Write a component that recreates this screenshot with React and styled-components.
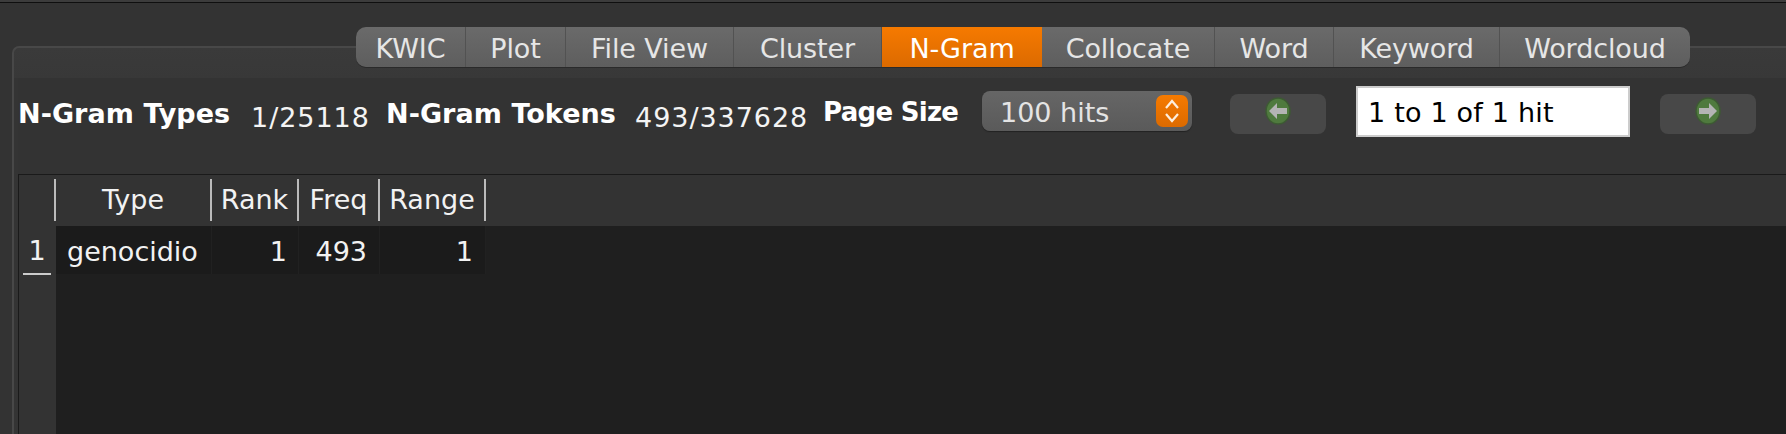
import React from "react";
import styled, { createGlobalStyle } from "styled-components";

const Global = createGlobalStyle`
  html, body { margin: 0; padding: 0; background: #333; overflow: hidden; }
  body { font-family: "DejaVu Sans", "Liberation Sans", sans-serif; }
`;
const Page = styled.div`
  width: 1786px; height: 434px; background: #333; overflow: hidden; box-sizing: border-box;
`;
const TopLine = styled.div`
  height: 2px; background: #3c3c3c; border-bottom: 1px solid #0f0f0f;
`;
const Shell = styled.div`
  padding: 43px 0 0 12px;
`;
const Frame = styled.div`
  height: 400px; border: 2px solid #484848; border-right: none; border-bottom: none;
  border-top-left-radius: 7px; background: linear-gradient(#3a3a3a 0, #383838 30px, #343434 30px);
  padding-left: 4px;
`;
const Tabs = styled.div`
  display: flex; height: 40px; width: 1334px; margin: -21px 0 0 338px;
  border-radius: 10px; overflow: hidden; background: linear-gradient(#6a6a6a, #5e5e5e);
  box-shadow: 0 1px 0 #2a2a2a;
`;
const Tab = styled.div`
  width: ${p => p.$w}px; box-sizing: border-box; display: flex; align-items: center; justify-content: center;
  font-size: 27px; letter-spacing: -0.1px; padding-top: 3px;
  color: ${p => (p.$active ? "#fff" : "#e6e6e6")};
  background: ${p => (p.$active ? "linear-gradient(#f67a00, #dc6a00)" : "transparent")};
  border-right: ${p => (p.$last || p.$active ? "none" : "1px solid #525252")};
`;
const Content = styled.div`
  margin-top: 11px; background: #333; height: 400px;
`;
const Toolbar = styled.div`
  height: 96px; display: flex; align-items: flex-start; color: #fff; box-sizing: border-box;
`;
const Label = styled.div`
  font-weight: 700; font-size: ${p => p.$size || 27}px; letter-spacing: ${p => p.$ls ?? 0.05}px; white-space: nowrap;
  width: ${p => p.$w}px; margin-top: ${p => p.$t}px; box-sizing: border-box;
`;
const Value = styled.div`
  font-size: 27px; letter-spacing: 0.95px; white-space: nowrap; color: #f4f4f4;
  width: ${p => p.$w}px; margin-top: ${p => p.$t}px; box-sizing: border-box;
`;
const Select = styled.div`
  width: 210px; height: 40px; margin-top: 13px; border-radius: 8px; background: linear-gradient(#666, #5a5a5a);
  box-shadow: 0 1px 1px #222; display: flex; align-items: center; justify-content: space-between;
  font-size: 27px; color: #e4e4e4; padding: 0 4px 0 18px; box-sizing: border-box;
`;
const SelectText = styled.span`
  padding-top: 2px;
`;
const Stepper = styled.div`
  width: 32px; height: 32px; border-radius: 7px; background: linear-gradient(#f67a00, #dc6a00);
  display: flex; align-items: center; justify-content: center;
`;
const NavButton = styled.div`
  width: 96px; height: 40px; border-radius: 8px; background: #484848; margin: 16px 0 0 ${p => p.$l}px;
  display: flex; justify-content: center; padding-top: 3px; box-sizing: border-box;
`;
const RangeBox = styled.div`
  width: 274px; height: 51px; margin: 8px 0 0 30px; background: #fff; border: 2px solid #ccc; box-sizing: border-box;
  color: #000; font-size: 27px; letter-spacing: 0.2px; padding: 2px 0 0 10px; display: flex; align-items: center;
`;
const Table = styled.div`
  border-top: 1px solid #1a1a1a; border-left: 1px solid #1a1a1a; height: 260px; display: grid;
  grid-template-columns: 37px 1fr; grid-template-rows: 51px 1fr;
`;
const Corner = styled.div`
  background: #333; padding-top: 4px;
  &::after { content: ""; display: block; width: 0; height: 42px; margin-left: 35px; border-right: 2px solid #bbb; }
`;
const HeaderRow = styled.div`
  display: flex; background: #333; padding-top: 4px;
`;
const HeadCell = styled.div`
  width: ${p => p.$w}px; height: 42px; border-right: 2px solid #bbb; box-sizing: border-box;
  display: flex; align-items: center; justify-content: center; padding-bottom: 1px;
  color: #f2f2f2; font-size: 27px;
`;
const RowHeader = styled.div`
  background: #333;
`;
const RowNo = styled.div`
  width: 28px; margin-left: 4px; height: 49px; box-sizing: border-box; border-bottom: 2px solid #ccc; padding-top: 1px;
  color: #f2f2f2; font-size: 27px; display: flex; align-items: center; justify-content: center;
`;
const Body = styled.div`
  background: #1f1f1f;
`;
const Row = styled.div`
  display: flex; height: 48px;
`;
const Cell = styled.div`
  width: ${p => p.$w}px; box-sizing: border-box; background: #1b1b1b; border-right: 1px solid #212121;
  display: flex; align-items: center; justify-content: ${p => (p.$left ? "flex-start" : "flex-end")};
  padding: 2px ${p => (p.$left ? 0 : (p.$r ?? 12))}px 0 ${p => (p.$left ? 11 : 0)}px;
  color: #f2f2f2; font-size: 27px;
`;

const Arrow = ({ dir }) => (
  <svg width="26" height="28" viewBox="0 0 26 28">
    <ellipse cx="13" cy="14" rx="12" ry="13" fill="#4f7a3e" stroke="#3d5a33" strokeWidth="1.5" />
    <path
      d={dir === "left" ? "M4 14 L12 6 V11 H22 V17 H12 V22 Z" : "M22 14 L14 6 V11 H4 V17 H14 V22 Z"}
      fill="#b4b4b4"
    />
  </svg>
);

const tabs = [
  ["KWIC", 110], ["Plot", 100], ["File View", 168], ["Cluster", 148], ["N-Gram", 160],
  ["Collocate", 173], ["Word", 119], ["Keyword", 166], ["Wordcloud", 190],
];
const cols = [["Type", 156], ["Rank", 87], ["Freq", 81], ["Range", 106]];

export default function App() {
  return (
    <Page>
      <Global />
      <TopLine />
      <Shell>
        <Frame>
          <Tabs>
            {tabs.map(([t, w], i) => (
              <Tab key={t} $w={w} $active={t === "N-Gram"} $last={i === tabs.length - 1}>{t}</Tab>
            ))}
          </Tabs>
          <Content>
            <Toolbar>
              <Label $w={233} $t={20}>N-Gram Types</Label>
              <Value $w={135} $t={24}>1/25118</Value>
              <Label $w={249} $t={20}>N-Gram Tokens</Label>
              <Value $w={188} $t={24}>493/337628</Value>
              <Label $w={159} $t={19} $size={26} $ls={-0.7}>Page Size</Label>
              <Select>
                <SelectText>100 hits</SelectText>
                <Stepper>
                  <svg width="16" height="26" viewBox="0 0 16 26" fill="none" stroke="#fdeedd" strokeWidth="2.2">
                    <path d="M2 10 L8 3 L14 10" />
                    <path d="M2 16 L8 23 L14 16" />
                  </svg>
                </Stepper>
              </Select>
              <NavButton $l={38}><Arrow dir="left" /></NavButton>
              <RangeBox>1 to 1 of 1 hit</RangeBox>
              <NavButton $l={30}><Arrow dir="right" /></NavButton>
            </Toolbar>
            <Table>
              <Corner />
              <HeaderRow>
                {cols.map(([t, w]) => <HeadCell key={t} $w={w}>{t}</HeadCell>)}
              </HeaderRow>
              <RowHeader><RowNo>1</RowNo></RowHeader>
              <Body>
                <Row>
                  <Cell $w={156} $left>genocidio</Cell>
                  <Cell $w={87} $r={11}>1</Cell>
                  <Cell $w={81}>493</Cell>
                  <Cell $w={106}>1</Cell>
                </Row>
              </Body>
            </Table>
          </Content>
        </Frame>
      </Shell>
    </Page>
  );
}
